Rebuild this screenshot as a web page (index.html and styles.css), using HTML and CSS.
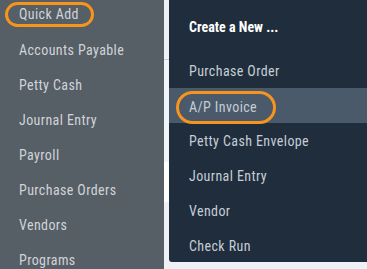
FILE: index.html
```html
<!DOCTYPE html>
<html>
<head>
<meta charset="utf-8">
<link rel="stylesheet" href="styles.css">
</head>
<body>
<div class="page">
  <nav class="sidebar">
    <ul class="side-list">
      <li class="side-item"><span class="ring ring-quick">Quick Add</span></li>
      <li class="side-item">Accounts Payable</li>
      <li class="side-item">Petty Cash</li>
      <li class="side-item">Journal Entry</li>
      <li class="side-item">Payroll</li>
      <li class="side-item">Purchase Orders</li>
      <li class="side-item">Vendors</li>
      <li class="side-item">Programs</li>
    </ul>
  </nav>
  <div class="strip">
    <div class="strip-top"></div>
    <div class="strip-mid"></div>
    <div class="strip-white"></div>
  </div>
  <div class="panel-wrap">
    <div class="panel">
      <div class="panel-head">Create a New ...</div>
      <ul class="menu">
        <li class="menu-item">Purchase Order</li>
        <li class="menu-item active"><span class="ring ring-ap">A/P Invoice</span></li>
        <li class="menu-item">Petty Cash Envelope</li>
        <li class="menu-item">Journal Entry</li>
        <li class="menu-item">Vendor</li>
        <li class="menu-item">Check Run</li>
      </ul>
    </div>
  </div>
</div>
</body>
</html>
```
FILE: styles.css
```css
* { box-sizing: border-box; }
html, body {
  margin: 0;
  padding: 0;
  background: #eef2f7;
  font-family: "Roboto Condensed", "Liberation Sans Narrow", Roboto, "Liberation Sans", sans-serif;
  font-stretch: condensed;
  font-size: 14px;
  overflow: hidden;
}
.page {
  display: flex;
  width: 367px;
  height: 269px;
}
.sidebar {
  width: 164px;
  flex: none;
  background: #565e66;
  height: 269px;
}
.side-list {
  list-style: none;
  margin: -3px 0 0 0;
  padding: 0;
}
.side-item {
  height: 35px;
  display: flex;
  align-items: center;
  padding-left: 19px;
  color: #d0d4d8;
  letter-spacing: 0.4px;
}
.ring {
  display: inline-flex;
  align-items: center;
  border: 3px solid #f7941d;
}
.ring-quick {
  margin-left: -14px;
  margin-top: -1px;
  padding: 0 12px 0 11px;
  height: 25px;
  border-radius: 13px;
}
.strip {
  width: 5px;
  flex: none;
  display: flex;
  flex-direction: column;
}
.strip-top {
  height: 60px;
  border-bottom: 1px solid #c7ccd2;
  background: #edf1f7;
}
.strip-mid {
  height: 102px;
  background: #f1f4f8;
}
.strip-white {
  height: 40px;
  background: #ffffff;
}
.panel-wrap {
  flex: 1;
}
.panel {
  background: #1f2d3d;
  height: 262px;
  border-bottom-left-radius: 3px;
}
.panel-head {
  height: 53px;
  display: flex;
  align-items: center;
  padding-left: 20px;
  color: #ffffff;
  font-weight: 700;
}
.menu {
  list-style: none;
  margin: 0;
  padding: 0;
}
.menu-item {
  height: 35px;
  display: flex;
  align-items: center;
  padding-left: 20px;
  color: #c6cdd5;
  letter-spacing: 0.4px;
}
.menu-item.active {
  background: #4b5a6b;
}
.ring-ap {
  margin-left: -13px;
  margin-top: 3px;
  padding: 0 16px 0 10px;
  height: 33px;
  border-radius: 17px;
}
```
